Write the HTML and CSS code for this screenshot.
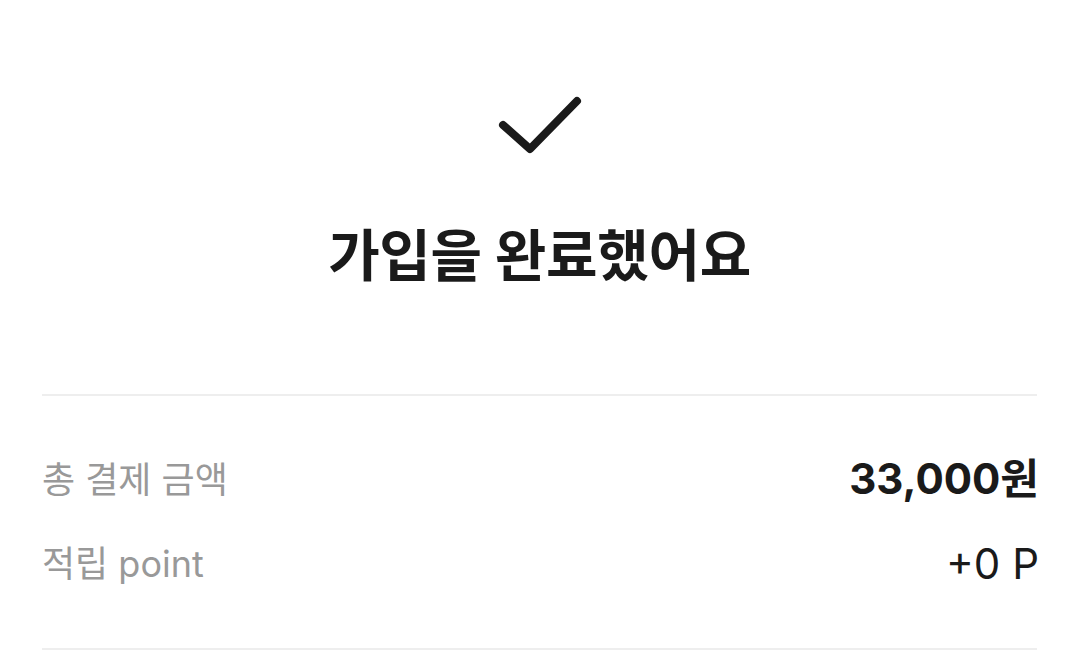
FILE: index.html
```html
<!DOCTYPE html>
<html lang="ko">
<head>
  <meta charset="UTF-8">
  <meta name="viewport" content="width=device-width, initial-scale=1">
  <title>가입 완료</title>
  <link rel="stylesheet" href="styles.css">
</head>
<body>

  <main class="완료">
    <section class="완료-헤더">
      <svg class="체크" width="90" height="70" viewBox="0 0 90 70" aria-hidden="true">
        <path d="M7 37 L34 61 L81 13" fill="none" stroke="#1a1a1a" stroke-width="8" stroke-linecap="round" stroke-linejoin="round"/>
      </svg>
      <h1 class="제목">가입을 완료했어요</h1>
    </section>

    <section class="결제-정보">
      <div class="행">
        <span class="라벨">총 결제 금액</span>
        <span class="금액">33,000원</span>
      </div>
      <div class="행">
        <span class="라벨">적립 point</span>
        <span class="포인트">+0 P</span>
      </div>
    </section>
  </main>

</body>
</html>
```

FILE: styles.css
```css
* {
  margin: 0;
  padding: 0;
  box-sizing: border-box;
}

body {
  font-family: 'Inter', 'Noto Sans CJK KR', sans-serif;
  background-color: #fff;
  color: #1a1a1a;
}

.완료 {
  padding: 0 42px;
}

.완료-헤더 {
  display: flex;
  flex-direction: column;
  align-items: center;
  padding-top: 88px;
  padding-bottom: 99px;
}

.체크 {
  display: block;
  margin-left: 2px;
}

.제목 {
  margin-top: 59px;
  font-size: 56px;
  font-weight: 700;
  line-height: 1.4;
  letter-spacing: -0.3px;
}

.결제-정보 {
  border-top: 2px solid #eeeeee;
  border-bottom: 2px solid #eeeeee;
  padding: 54px 0 54px;
  display: flex;
  flex-direction: column;
  gap: 26px;
}

.행 {
  display: flex;
  justify-content: space-between;
  align-items: center;
  line-height: 1.4;
}

.라벨 {
  font-size: 36px;
  color: #999;
}

.금액 {
  font-size: 42px;
  font-weight: 700;
  margin-right: -2px;
}

.포인트 {
  font-size: 42px;
  margin-right: -2px;
}
```
